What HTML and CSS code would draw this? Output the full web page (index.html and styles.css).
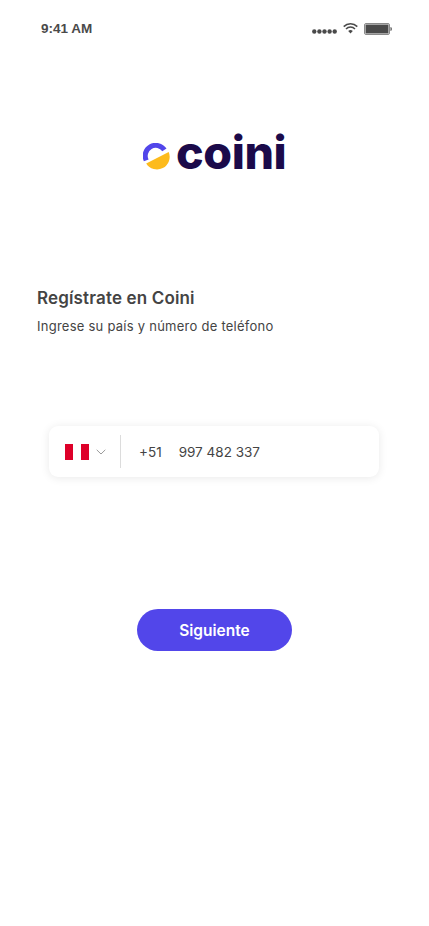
FILE: index.html
```html
<!DOCTYPE html>
<html lang="es">
<head>
<meta charset="utf-8">
<title>Coini</title>
<link rel="stylesheet" href="styles.css">
</head>
<body>
<main class="screen">
  <header class="status">
    <span class="time">9:41 AM</span>
    <div class="status-icons">
      <svg class="signal" width="25" height="5" viewBox="0 0 25 5"><g fill="#4a4a4a"><circle cx="2.3" cy="2.5" r="2.2"/><circle cx="7.4" cy="2.5" r="2.2"/><circle cx="12.5" cy="2.5" r="2.2"/><circle cx="17.6" cy="2.5" r="2.2"/><circle cx="22.7" cy="2.5" r="2.2"/></g></svg>
      <svg class="wifi" width="15" height="11" viewBox="0 0 15 11"><g fill="none" stroke="#4a4a4a" stroke-width="1.5"><path d="M.7 3.6a9.6 9.6 0 0 1 13.6 0"/><path d="M3 6a6.3 6.3 0 0 1 9 0"/></g><path d="M5.2 8a3.3 3.3 0 0 1 4.6 0L7.5 10.6z" fill="#4a4a4a"/></svg>
      <svg class="battery" width="28" height="12" viewBox="0 0 28 12"><rect x=".5" y=".5" width="25" height="11" rx="1.5" fill="none" stroke="#8a8a8a"/><rect x="1.5" y="1.5" width="23" height="9" fill="#4a4a4a"/><path d="M26.5 4v4c.8 0 1.3-.8 1.3-2s-.5-2-1.3-2z" fill="#4a4a4a"/></svg>
    </div>
  </header>

  <div class="logo">
    <svg class="logo-mark" width="27" height="29" viewBox="0 0 27 29">
      <path d="M.9 18.3A13 13 0 0 1 23.5 5.6L19.3 8.3A8 8 0 0 0 5.6 16.5Z" fill="#5246ea"/>
      <path d="M3.2 20.5 25.7 8.9A12.7 12.7 0 0 1 3.2 20.5Z" fill="#fdbb1c"/>
    </svg>
    <span class="logo-text">coini</span>
  </div>

  <section class="intro">
    <h1 class="title">Regístrate en Coini</h1>
    <p class="subtitle">Ingrese su país y número de teléfono</p>
  </section>

  <div class="phone-card">
    <div class="flag"><span class="red"></span><span class="white"></span><span class="red"></span></div>
    <svg class="chevron" width="10" height="6" viewBox="0 0 10 6"><path d="M.7.8 5 5l4.3-4.2" fill="none" stroke="#9a9a9a" stroke-width="1"/></svg>
    <span class="divider"></span>
    <span class="code">+51</span>
    <span class="number">997 482 337</span>
  </div>

  <div class="actions"><button class="next" type="button">Siguiente</button></div>
</main>
</body>
</html>
```

FILE: styles.css
```css
* { box-sizing: border-box; }
html, body { margin: 0; padding: 0; background: #fff; }
.screen {
  width: 429px;
  height: 926px;
  overflow: hidden;
  display: flex;
  flex-direction: column;
  font-family: "Inter", "Liberation Sans", sans-serif;
  color: #444;
}
.status {
  height: 58px;
  padding: 20px 37px 0 41px;
  display: flex;
  justify-content: space-between;
  align-items: flex-start;
}
.time {
  font-family: "Liberation Sans", sans-serif;
  font-size: 13.5px;
  font-weight: 700;
  line-height: 18px;
  color: #4a4a4a;
}
.status-icons { display: flex; align-items: center; gap: 5px; height: 18px; }
.signal { margin-top: 5px; margin-right: 1px; }
.wifi { margin-top: -2px; margin-right: 1px; }
.logo {
  margin-top: 66px;
  height: 56px;
  padding-left: 143px;
  display: flex;
  align-items: center;
  gap: 6px;
}
.logo-text {
  font-family: "Inter", sans-serif;
  font-size: 46.5px;
  font-weight: 800;
  line-height: 56px;
  letter-spacing: -0.4px;
  color: #1b0a4a;
}
.logo-mark { margin-top: 11px; }
.intro { margin-top: 106px; padding-left: 37px; }
.title {
  margin: 0;
  font-size: 17px;
  font-weight: 600;
  line-height: 24px;
  letter-spacing: 0.15px;
  color: #444;
}
.subtitle {
  margin: 5.5px 0 0;
  font-size: 13px;
  font-weight: 400;
  line-height: 20px;
  letter-spacing: 0.25px;
  color: #444;
}
.phone-card {
  margin: 90.5px 0 0 49px;
  width: 330px;
  height: 51px;
  border-radius: 9px;
  background: #fff;
  box-shadow: 0 1px 10px rgba(0, 0, 0, 0.09);
  display: flex;
  align-items: center;
  padding-left: 16px;
  font-size: 13.5px;
  color: #444;
}
.flag { display: flex; width: 24px; height: 16px; }
.flag span { flex: 1; }
.red { background: #de0029; }
.white { background: #fff; }
.chevron { margin-left: 7px; }
.divider { width: 1px; height: 33px; margin-left: 14px; background: #dcdcdc; }
.code { margin-left: 18px; }
.number { margin-left: 17px; }
.actions { margin-top: 132px; display: flex; justify-content: center; }
.next {
  width: 155px;
  height: 42px;
  border: 0;
  border-radius: 21px;
  background: #5246ea;
  color: #fff;
  font-family: "Inter", sans-serif;
  font-size: 15.5px;
  font-weight: 600;
}
```
